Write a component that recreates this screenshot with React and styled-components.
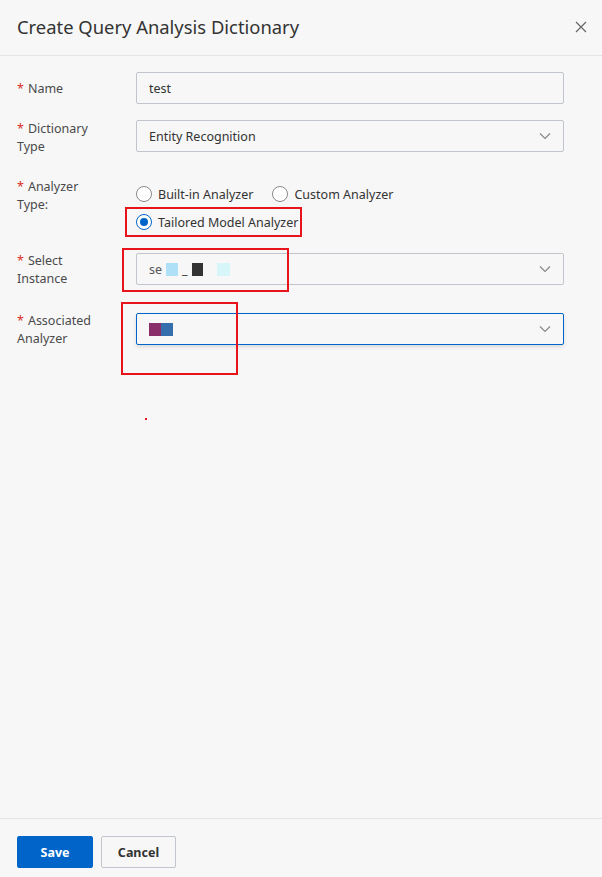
import React from "react";
import styled, { createGlobalStyle } from "styled-components";

const GlobalStyle = createGlobalStyle`
  * { box-sizing: border-box; }
  html, body { margin: 0; padding: 0; background: #f7f7f7; }
  body { font-family: "Noto Sans", "Open Sans", sans-serif; color: #333; }
`;

const Dialog = styled.div`
  width: 602px;
  height: 877px;
  display: flex;
  flex-direction: column;
  background: #f7f7f7;
  position: relative;
`;

const Header = styled.div`
  height: 56px;
  flex-shrink: 0;
  display: flex;
  align-items: center;
  justify-content: space-between;
  padding: 0 14px 2px 17px;
  border-bottom: 1px solid #e5e5e5;
`;

const Title = styled.h2`
  margin: 0;
  font-size: 18.4px;
  font-weight: 400;
  color: #333;
`;

const Close = styled.button`
  border: 0;
  background: none;
  padding: 0;
  width: 14px;
  height: 14px;
  display: flex;
  cursor: pointer;
`;

const Body = styled.div`
  flex: 1;
  padding: 16px 38px 0 17px;
`;

const Row = styled.div`
  display: flex;
  margin-top: ${(p) => p.$gap || 0}px;
`;

const Label = styled.div`
  width: 119px;
  flex-shrink: 0;
  font-size: 12.5px;
  line-height: 18px;
  color: #4a4a4a;
  padding-top: ${(p) => (p.$single ? 8 : 0)}px;
  padding-right: 30px;
`;

const Star = styled.span`
  color: #d93026;
  margin-right: 4px;
`;

const Field = styled.div`
  flex: 1;
  height: 32px;
  margin-top: ${(p) => p.$offset || 0}px;
  border: 1px solid ${(p) => (p.$focus ? "#0064c8" : "#c0c6cc")};
  box-shadow: ${(p) => (p.$focus ? "0 2px 4px rgba(0,0,0,0.12)" : "none")};
  border-radius: 2px;
  background: #f7f7f7;
  display: flex;
  align-items: center;
  padding: 0 12px;
  font-size: 12.5px;
  color: #333;
`;

const Value = styled.div`
  flex: 1;
  display: flex;
  align-items: center;
  gap: 4px;
`;

const Radios = styled.div`
  width: 285px;
  display: flex;
  flex-wrap: wrap;
  padding-top: 2px;
`;

const RadioItem = styled.label`
  height: 28px;
  display: flex;
  align-items: center;
  gap: 6px;
  font-size: 12.5px;
  color: #333;
  white-space: nowrap;
  margin-right: 19px;
`;

const Circle = styled.span`
  width: 16px;
  height: 16px;
  border-radius: 50%;
  border: 1px solid ${(p) => (p.$on ? "#0064c8" : "#888")};
  background: #fff;
  display: flex;
  align-items: center;
  justify-content: center;
  &::after {
    content: "";
    width: 8px;
    height: 8px;
    border-radius: 50%;
    background: ${(p) => (p.$on ? "#0064c8" : "transparent")};
  }
`;

const Blur = styled.span`
  display: inline-block;
  width: ${(p) => p.$w}px;
  height: 13px;
  background: ${(p) => p.$c};
`;

const Footer = styled.div`
  height: 59px;
  flex-shrink: 0;
  border-top: 1px solid #e5e5e5;
  padding: 17px 17px 0;
  display: flex;
  gap: 8px;
  align-items: flex-start;
`;

const Button = styled.button`
  height: 32px;
  width: ${(p) => p.$w}px;
  border-radius: 2px;
  font-family: inherit;
  font-size: 12.5px;
  font-weight: 700;
  cursor: pointer;
  border: 1px solid ${(p) => (p.$primary ? "#0064c8" : "#c0c6cc")};
  background: ${(p) => (p.$primary ? "#0064c8" : "#f7f7f7")};
  color: ${(p) => (p.$primary ? "#fff" : "#333")};
`;

const Mark = styled.div`
  position: absolute;
  left: ${(p) => p.$x}px;
  top: ${(p) => p.$y}px;
  width: ${(p) => p.$w}px;
  height: ${(p) => p.$h}px;
  border: 2px solid #e8141b;
  pointer-events: none;
`;

const Dot = styled.div`
  position: absolute;
  left: 145px;
  top: 418px;
  width: 2px;
  height: 2px;
  background: #e8141b;
`;

const Chevron = () => (
  <svg width="12" height="8" viewBox="0 0 12 8">
    <path d="M1 1.5l5 5 5-5" fill="none" stroke="#888" strokeWidth="1.2" />
  </svg>
);

export default function App() {
  return (
    <>
      <GlobalStyle />
      <Dialog>
        <Header>
          <Title>Create Query Analysis Dictionary</Title>
          <Close aria-label="close">
            <svg width="14" height="14" viewBox="0 0 14 14">
              <path d="M2 2l10 10M12 2L2 12" stroke="#666" strokeWidth="1.2" />
            </svg>
          </Close>
        </Header>
        <Body>
          <Row>
            <Label $single><Star>*</Star>Name</Label>
            <Field><Value>test</Value></Field>
          </Row>
          <Row $gap={16}>
            <Label><Star>*</Star>Dictionary Type</Label>
            <Field><Value>Entity Recognition</Value><Chevron /></Field>
          </Row>
          <Row $gap={22}>
            <Label><Star>*</Star>Analyzer Type:</Label>
            <Radios>
              <RadioItem><Circle />Built-in Analyzer</RadioItem>
              <RadioItem><Circle />Custom Analyzer</RadioItem>
              <RadioItem><Circle $on />Tailored Model Analyzer</RadioItem>
            </Radios>
          </Row>
          <Row $gap={16}>
            <Label><Star>*</Star>Select Instance</Label>
            <Field $offset={1}>
              <Value>
                <span style={{ color: "#555" }}>se</span>
                <Blur $w={12} $c="#aee0f7" />
                <span>_</span>
                <Blur $w={11} $c="#333" />
                <span style={{ width: 6 }} />
                <Blur $w={13} $c="#d6f6f9" />
              </Value>
              <Chevron />
            </Field>
          </Row>
          <Row $gap={24}>
            <Label><Star>*</Star>Associated Analyzer</Label>
            <Field $focus $offset={1}>
              <Value style={{ gap: 0 }}>
                <Blur $w={12} $c="#8a2e6a" />
                <Blur $w={12} $c="#356ead" />
              </Value>
              <Chevron />
            </Field>
          </Row>
        </Body>
        <Footer>
          <Button $primary $w={76}>Save</Button>
          <Button $w={75}>Cancel</Button>
        </Footer>
        <Mark $x={125} $y={207} $w={177} $h={30} />
        <Mark $x={122} $y={248} $w={167} $h={44} />
        <Mark $x={121} $y={302} $w={117} $h={73} />
        <Dot />
      </Dialog>
    </>
  );
}
